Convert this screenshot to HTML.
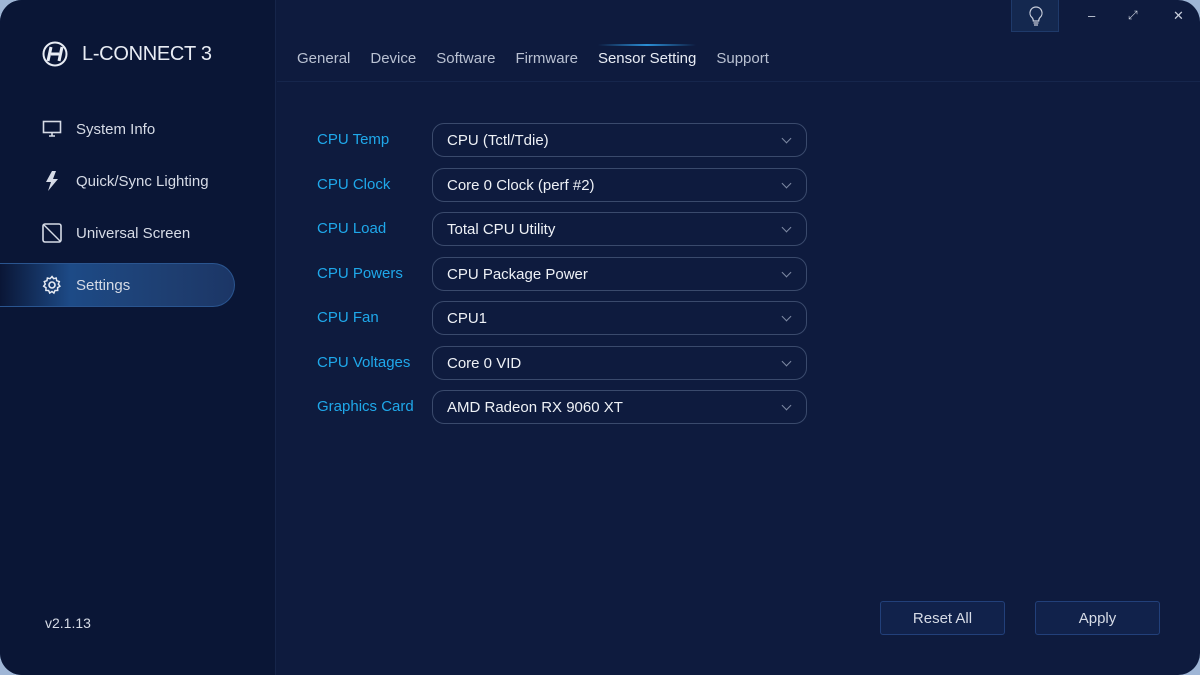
<!DOCTYPE html>
<html><head><meta charset="utf-8"><style>
*{margin:0;padding:0;box-sizing:border-box}
html,body{width:1200px;height:675px;overflow:hidden;background:#9fb6d6;font-family:"Liberation Sans",sans-serif}
.win{position:absolute;left:0;top:0;width:1200px;height:675px;border-radius:22px;background:#0e1b3e;overflow:hidden}
.side{position:absolute;left:0;top:0;width:276px;height:675px;background:#0a1636;border-right:1px solid #16254a}
.logo{position:absolute;left:42px;top:41px;display:flex;align-items:center;color:#e8ecf4;font-size:20px;letter-spacing:-0.3px}
.logo svg{margin-right:14px}
.nav{position:absolute;left:0;width:235px;height:44px;display:flex;align-items:center;padding-left:42px;color:#d6dbe6;font-size:15px}
.nav svg{margin-right:14px}
.nav.act{background:linear-gradient(90deg,rgba(20,60,120,0) 0%,#1d4a86 30%,#1e3f72 70%,#1c3666 100%);border-radius:0 22px 22px 0;border:1px solid #2a5590;border-left:none}
.ver{position:absolute;left:45px;top:615px;color:#d6dbe6;font-size:14px}
.tabs{position:absolute;left:297px;top:50px;display:flex;gap:20px;font-size:15px;color:#b9c1d2}
.tabs span.a{color:#e8ecf4;position:relative}
.tabs span.a:before{content:"";position:absolute;left:0;right:0;top:-6px;height:2px;background:linear-gradient(90deg,transparent,#2b8fd6,transparent)}
.hline{position:absolute;left:277px;top:81px;width:923px;height:1px;background:#16264c}
.row{position:absolute;left:317px;height:34px;width:490px}
.row label{position:absolute;left:0;top:8px;color:#1fa8ea;font-size:15px}
.row .sel{position:absolute;left:115px;top:0;width:375px;height:34px;border:1px solid #3a4a6c;border-radius:12px;color:#eef1f6;font-size:15px;padding:8px 0 0 14px}
.row .sel:after{content:"";position:absolute;right:16px;top:11px;width:6px;height:6px;border-right:1px solid #7d89a3;border-bottom:1px solid #7d89a3;transform:rotate(45deg)}
.btn{position:absolute;top:601px;width:125px;height:34px;border:1px solid #22407a;border-radius:3px;background:#11224b;color:#d6dbe6;font-size:15px;text-align:center;line-height:34px}
.bulb{position:absolute;left:1011px;top:0;width:48px;height:32px;background:#14284f;border:1px solid #1f3a6a;border-top:none}
.wc{position:absolute;top:8px;color:#c9cfdc;font-size:13px}
</style></head><body><div class="win">
<div class="side">
<div class="logo"><svg width="26" height="26" viewBox="0 0 26 26"><circle cx="13" cy="13" r="11.5" fill="none" stroke="#e8ecf4" stroke-width="2"/><path d="M9 6 L6 20 M9 13 L17 13 M20 6 L17 20" stroke="#e8ecf4" stroke-width="3" fill="none"/></svg>L-CONNECT 3</div>
<div class="nav" style="top:107px"><svg width="20" height="18" viewBox="0 0 20 18"><rect x="1.5" y="1.5" width="17" height="11" fill="none" stroke="#d6dbe6" stroke-width="1.6"/><path d="M7 16h6M10 12.5v3" stroke="#d6dbe6" stroke-width="1.6"/></svg>System Info</div>
<div class="nav" style="top:159px"><svg width="20" height="22" viewBox="0 0 20 22"><path d="M10 1 L4 12 H9 L6 21 L16 9 H11 L14 1Z" fill="#d6dbe6"/></svg>Quick/Sync Lighting</div>
<div class="nav" style="top:211px"><svg width="20" height="20" viewBox="0 0 20 20"><rect x="1" y="1" width="18" height="18" rx="2" fill="none" stroke="#d6dbe6" stroke-width="1.6"/><path d="M2 2L18 18" stroke="#d6dbe6" stroke-width="1.4"/></svg>Universal Screen</div>
<div class="nav act" style="top:263px"><svg width="20" height="20" viewBox="0 0 20 20"><circle cx="10" cy="10" r="3" fill="none" stroke="#e8ecf4" stroke-width="1.6"/><path d="M10 1.5l1.6 2.2 2.6-.7.5 2.7 2.6.9-1 2.5 1.6 2.1-2.3 1.5.1 2.7-2.7.1-1.1 2.5L10 16.5l-2.3 1.5-1.1-2.5-2.7-.1.1-2.7L1.7 11.2l1.6-2.1-1-2.5 2.6-.9.5-2.7 2.6.7z" fill="none" stroke="#e8ecf4" stroke-width="1.5"/></svg>Settings</div>
<div class="ver">v2.1.13</div>
</div>
<div class="tabs"><span>General</span><span>Device</span><span>Software</span><span>Firmware</span><span class="a">Sensor Setting</span><span>Support</span></div>
<div class="hline"></div>
<div class="bulb"><svg width="48" height="32" viewBox="0 0 48 32"><path d="M24 7a6 6 0 0 0-4 10.5c1 1 1.3 2 1.3 3.5h5.4c0-1.5.3-2.5 1.3-3.5A6 6 0 0 0 24 7z M21.5 23h5M22 25h4" fill="none" stroke="#c9cfdc" stroke-width="1.2"/></svg></div>
<div class="wc" style="left:1088px">–</div>
<div class="wc" style="left:1128px;font-size:12px">⤢</div>
<div class="wc" style="left:1173px">✕</div>
<div class="row" style="top:123px"><label>CPU Temp</label><div class="sel">CPU (Tctl/Tdie)</div></div>
<div class="row" style="top:168px"><label>CPU Clock</label><div class="sel">Core 0 Clock (perf #2)</div></div>
<div class="row" style="top:212px"><label>CPU Load</label><div class="sel">Total CPU Utility</div></div>
<div class="row" style="top:257px"><label>CPU Powers</label><div class="sel">CPU Package Power</div></div>
<div class="row" style="top:301px"><label>CPU Fan</label><div class="sel">CPU1</div></div>
<div class="row" style="top:346px"><label>CPU Voltages</label><div class="sel">Core 0 VID</div></div>
<div class="row" style="top:390px"><label>Graphics Card</label><div class="sel">AMD Radeon RX 9060 XT</div></div>
<div class="btn" style="left:880px">Reset All</div>
<div class="btn" style="left:1035px">Apply</div>
</div></body></html>
